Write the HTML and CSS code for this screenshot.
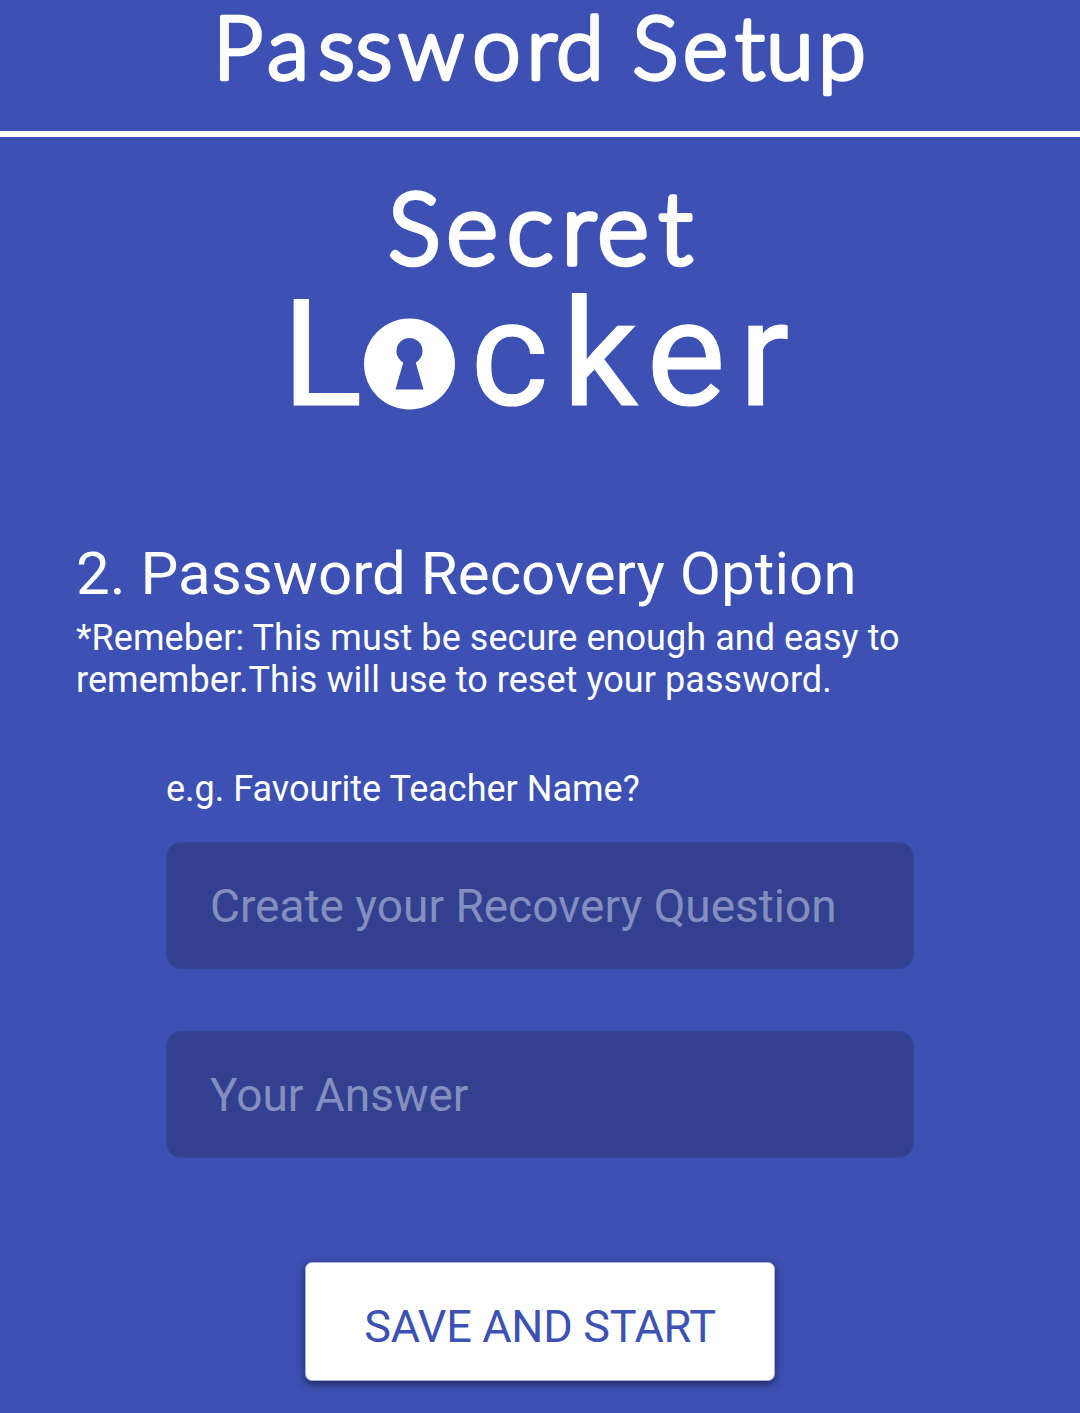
FILE: index.html
```html
<!doctype html>
<html lang="en">
  <head>
    <meta charset="UTF-8" />
    <meta name="viewport" content="width=device-width, initial-scale=1.0" />
    <title>Password Setup</title>
    <link rel="stylesheet" href="styles.css">
  </head>
  <body>
    <header class="header">
      <svg class="title" viewBox="0 0 1080 131" role="img" aria-label="Password Setup">
        <text class="rounded title-text" y="78.5" x="238 288 336.5 374 431 496.5 542 580 618 655.5 705.5 750 790 842">Password Setup</text>
      </svg>
    </header>

    <main class="content">
      <svg class="logo" viewBox="0 0 540 240" role="img" aria-label="Secret Locker">
        <text class="rounded secret-text" y="83.5" x="144.5 202 260 309 353 405.5">Secret</text>
        <text class="locker-text" y="225" x="52">L</text>
        <text class="locker-text" y="225" x="239.5 330 416 494">cker</text>
        <!-- keyhole -->
        <circle class="lock" cx="139.5" cy="184" r="45.5" />
        <circle class="keyhole" cx="139.5" cy="171" r="13" />
        <path class="keyhole" d="M134 180h11L153.5 209.500h-28z" />
      </svg>

      <h2 class="heading">2. Password Recovery Option</h2>
      <p class="note">*Remeber: This must be secure enough and easy to remember.This will use to reset your password.</p>

      <form class="form">
        <label class="hint" for="question">e.g. Favourite Teacher Name?</label>
        <input class="field" id="question" type="text" placeholder="Create your Recovery Question" />
        <input class="field" id="answer" type="text" placeholder="Your Answer" aria-label="Your Answer" />
        <button class="save-button" type="button">SAVE AND START</button>
      </form>
    </main>
  </body>
</html>
```
FILE: styles.css
```css
* {
  box-sizing: border-box;
}
body {
  margin: 0;
  height: 1413px;
  overflow: hidden;
  background: #3d50b3;
  color: #fff;
  font-family: Roboto, "Liberation Sans", sans-serif;
}
.header {
  height: 137px;
  border-bottom: 6px solid #fff;
}
.title {
  display: block;
  width: 1080px;
  height: 131px;
  overflow: visible;
}
.rounded {
  font-family: Lato, sans-serif;
  font-weight: 300;
  fill: #fff;
  stroke: #fff;
  stroke-width: 4.5px;
  stroke-linejoin: round;
  text-anchor: middle;
}
.title-text {
  font-size: 86px;
}
.secret-text {
  font-size: 98px;
  stroke-width: 5.5px;
}
.content {
  padding: 43px 76px 0;
}
.logo {
  display: block;
  width: 540px;
  height: 240px;
  margin: 0 auto;
  overflow: visible;
}
.locker-text {
  font-family: Roboto, sans-serif;
  font-size: 149px;
  fill: #fff;
  stroke: #fff;
  stroke-width: 1.2px;
  text-anchor: middle;
}
.lock {
  fill: #fff;
}
.keyhole {
  fill: #3d50b3;
}
.heading {
  margin: 118px 0 0;
  font-size: 60px;
  font-weight: 400;
  line-height: 72px;
  letter-spacing: 0.04px;
  white-space: nowrap;
}
.note {
  margin: 7px 0 0;
  width: 860px;
  font-size: 36px;
  line-height: 42px;
  letter-spacing: 0.06px;
}
.form {
  display: flex;
  flex-direction: column;
  width: 748px;
  margin: 67px auto 0;
}
.hint {
  margin-bottom: 32px;
  font-size: 36px;
  line-height: 42px;
}
.field {
  height: 127px;
  margin-bottom: 62px;
  padding: 0 43px;
  border: 1px solid #35459a;
  border-radius: 15px;
  background: #32408f;
  color: #fff;
  font-family: inherit;
  font-size: 46px;
}
.field::placeholder {
  color: #848fbf;
  opacity: 1;
}
.save-button {
  align-self: center;
  width: 470px;
  height: 119px;
  margin-top: 42px;
  padding: 10px 0 0;
  border: 1px solid #a9b2dc;
  border-radius: 7px;
  background: #fff;
  box-shadow: 0 3px 9px rgba(0, 0, 0, 0.5);
  color: #3d50b3;
  font-family: inherit;
  font-size: 45px;
  letter-spacing: -0.3px;
}
```
